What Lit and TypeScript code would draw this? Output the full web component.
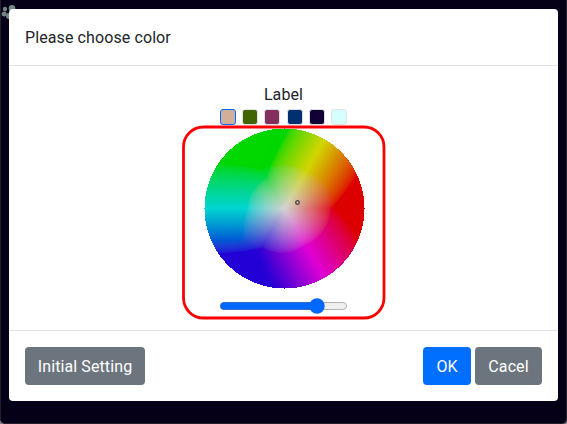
import { LitElement, html, css, svg } from "lit";
import { customElement, property } from "lit/decorators.js";

const SIZE = 161;

@customElement("color-wheel")
class ColorWheel extends LitElement {
  static styles = css`
    :host { display: block; position: relative; width: 161px; height: 161px; }
    canvas { display: block; }
    .cursor {
      position: absolute; left: 90.5px; top: 71.5px; width: 5px; height: 5px; display: block;
    }
  `;

  firstUpdated() {
    const canvas = this.renderRoot.querySelector("canvas") as HTMLCanvasElement;
    const ctx = canvas.getContext("2d")!;
    const image = ctx.createImageData(SIZE, SIZE);
    const value = 0.82;
    const full = 57; // radius at which saturation reaches 1
    const gamma = 2.2;
    for (let y = 0; y < SIZE; y++) {
      for (let x = 0; x < SIZE; x++) {
        const dx = x - 80;
        const dy = 80 - y;
        const r = Math.hypot(dx, dy);
        if (r > 80) continue;
        const hue = ((Math.atan2(dy, dx) * 180) / Math.PI + 360) % 360;
        const s = r / full;
        const channel = (n: number) => {
          const k = (n + hue / 60) % 6;
          const v = value * (1 - s * Math.max(0, Math.min(k, 4 - k, 1)));
          return Math.pow(Math.max(0, v), gamma);
        };
        const R = channel(5);
        const G = channel(3);
        const B = channel(1);
        const out = [
          R * 1.12 - 0.13 * G + 0.02 * B,
          G * 1.06 - 0.025 * R - 0.03 * B,
          B * 1.03 - 0.035 * G - 0.01 * R,
        ];
        const i = (y * SIZE + x) * 4;
        out.forEach((c, j) => {
          image.data[i + j] = 256 * Math.pow(Math.max(0, c), 1 / gamma);
        });
        image.data[i + 3] = 255;
      }
    }
    ctx.putImageData(image, 0, 0);
  }

  render() {
    return html`<canvas width=${SIZE} height=${SIZE}></canvas>
      <svg class="cursor" viewBox="0 0 5 5"><circle cx="2.5" cy="2.5" r="1.8" fill="none" stroke="#4d4544" stroke-width="1.3" /></svg>`;
  }
}

@customElement("value-slider")
class ValueSlider extends LitElement {
  static styles = css`
    :host { display: block; width: 127px; height: 16px; }
    svg { display: block; }
  `;
  render() {
    return html`<svg width="127" height="16" viewBox="0 0 127 16">
      ${svg`<rect x=".5" y="4.5" width="126" height="7" rx="3.5" fill="#efefef" stroke="#b2b2b2"/>
      <path d="M97 4.5H4a3.5 3.5 0 0 0 0 7h93z" fill="#0068ff" stroke="#2365c0" stroke-width=".8"/>
      <circle cx="97" cy="8" r="7.7" fill="#0068ff"/>`}
    </svg>`;
  }
}

@customElement("app-root")
class AppRoot extends LitElement {
  @property({ attribute: false }) colors = ["#d1b09a", "#416400", "#822f5e", "#003070", "#110036", "#d6ffff"];

  static styles = css`
    :host {
      display: block; position: relative; width: 567px; height: 424px; box-sizing: border-box;
      padding: 9px; overflow: hidden; background: #8b7c8c;
      font: 16px/24px Roboto, "Liberation Sans", sans-serif; color: #212529;
    }
    .backdrop {
      position: absolute; inset: 0; box-sizing: border-box; background: #050017;
      border: 1px solid #24202e; border-top: 0; border-radius: 0 0 5px 5px;
    }
    .paw { position: absolute; left: 0; top: 3px; }
    .dialog {
      position: relative; width: 549px; height: 392px; display: flex; flex-direction: column;
      background: #fff; border-radius: 4px; box-sizing: border-box;
    }
    header { height: 57px; box-sizing: border-box; padding: 17px 16px 15px; border-bottom: 1px solid #dee2e6; }
    .title { letter-spacing: 0.1px; }
    main { flex: 1; display: flex; flex-direction: column; align-items: center; padding-top: 17px; }
    .label { letter-spacing: 0.1px; }
    .swatches { display: flex; gap: 6.2px; margin-top: 2px; }
    .swatch { width: 16px; height: 16px; box-sizing: border-box; border: 1px solid #dee2e6; border-radius: 3px; }
    .selected { border-color: #0068ff; }
    .picker { position: relative; display: flex; flex-direction: column; align-items: center; margin-top: 3px; }
    color-wheel { margin-left: 2px; }
    value-slider { margin-top: 9px; }
    .frame {
      position: absolute; left: -21px; top: -3px; display: block;
    }
    footer {
      height: 71px; box-sizing: border-box; padding: 16px; border-top: 1px solid #dee2e6;
      display: flex; gap: 4px;
    }
    button {
      height: 38px; padding: 2px 0 0; border: 0; border-radius: 4px; background: #6c757d; color: #fff;
      font: inherit; white-space: nowrap; letter-spacing: 0.1px;
    }
    .initial { width: 120px; margin-right: auto; }
    .ok { width: 48px; background: #006fff; }
    .cancel { width: 67px; }
  `;

  render() {
    return html`
      <div class="backdrop"></div>
      <svg class="paw" width="18" height="18" viewBox="0 0 18 18" fill="#748684">
        <circle cx="5" cy="6" r="2.2" /><circle cx="12" cy="5.3" r="3.3" />
        <circle cx="4.2" cy="11" r="2.5" /><circle cx="9" cy="13" r="3" />
      </svg>
      <section class="dialog">
        <header><span class="title">Please choose color</span></header>
        <main>
          <div class="label">Label</div>
          <div class="swatches">
            ${this.colors.map((c, i) => html`<span class="swatch ${i === 0 ? "selected" : ""}" style="background:${c}"></span>`)}
          </div>
          <div class="picker">
            <color-wheel></color-wheel>
            <value-slider></value-slider>
            <svg class="frame" width="206" height="196" viewBox="0 0 206 196">
              <rect x="2.5" y="2" width="200.5" height="191" rx="20" fill="none" stroke="#fc0000" stroke-width="2.8" />
            </svg>
          </div>
        </main>
        <footer>
          <button class="initial">Initial Setting</button>
          <button class="ok">OK</button>
          <button class="cancel">Cacel</button>
        </footer>
      </section>
    `;
  }
}
